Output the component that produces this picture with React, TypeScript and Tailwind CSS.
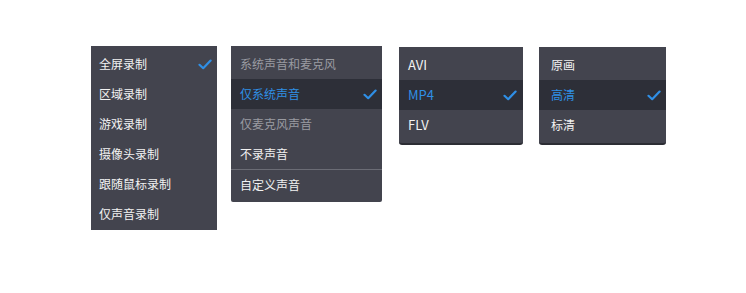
import React from 'react';

interface Item {
  label: string;
  state?: 'normal' | 'active' | 'checked' | 'disabled';
  divider?: boolean;
}

const Check = () => (
  <svg width="14" height="11" viewBox="0 0 14 11" className="shrink-0">
    <path d="M1.5 5.8 L5.2 9.2 L12.6 1.6" fill="none" stroke="#2f8fe6" strokeWidth="2.2" strokeLinecap="round" strokeLinejoin="round" />
  </svg>
);

const Menu: React.FC<{ items: Item[]; className: string; padX: string; checkRight: string; latin?: boolean }> = ({
  items,
  className,
  padX,
  checkRight,
  latin,
}) => (
  <div className={`bg-[#43444e] pt-[3px] ${className}`}>
    {items.map((it, i) => (
      <React.Fragment key={i}>
        {it.divider && <div className="h-px bg-[#6b6c75]" />}
        <div
          className={`h-[30px] flex items-center justify-between ${padX} ${checkRight} ${
            it.state === 'active' ? 'bg-[#2d2f38] text-[#2f8fe6]' : it.state === 'disabled' ? 'text-[#9a9ba2]' : 'text-[#f2f2f2]'
          } ${latin ? 'text-[13px]' : 'text-[12px]'}`}
        >
          <span>{it.label}</span>
          {(it.state === 'active' || it.state === 'checked') && <Check />}
        </div>
      </React.Fragment>
    ))}
  </div>
);

export default function App() {
  return (
    <div
      className="w-[746px] h-[293px] bg-white flex items-start"
      style={{ fontFamily: '"Microsoft YaHei", "Noto Sans CJK SC", "Noto Sans", sans-serif' }}
    >
      <Menu
        className="ml-[91px] mt-[46px] w-[126px] pb-[1px]"
        padX="pl-[8px]"
        checkRight="pr-[5px]"
        items={[
          { label: '全屏录制', state: 'checked' },
          { label: '区域录制' },
          { label: '游戏录制' },
          { label: '摄像头录制' },
          { label: '跟随鼠标录制' },
          { label: '仅声音录制' },
        ]}
      />
      <Menu
        className="ml-[14px] mt-[46px] w-[151px] pb-[2px] rounded-b-[2px]"
        padX="pl-[9px]"
        checkRight="pr-[5px]"
        items={[
          { label: '系统声音和麦克风', state: 'disabled' },
          { label: '仅系统声音', state: 'active' },
          { label: '仅麦克风声音', state: 'disabled' },
          { label: '不录声音' },
          { label: '自定义声音', divider: true },
        ]}
      />
      <Menu
        className="ml-[17px] mt-[47px] w-[124px] pb-[3px] rounded-b-[3px] border-b-2 border-[#2c2d34]"
        padX="pl-[9px]"
        checkRight="pr-[6px]"
        latin
        items={[{ label: 'AVI' }, { label: 'MP4', state: 'active' }, { label: 'FLV' }]}
      />
      <Menu
        className="ml-[16px] mt-[47px] w-[127px] pb-[3px] rounded-b-[3px] border-b-2 border-[#2c2d34]"
        padX="pl-[12px]"
        checkRight="pr-[5px]"
        items={[{ label: '原画' }, { label: '高清', state: 'active' }, { label: '标清' }]}
      />
    </div>
  );
}
